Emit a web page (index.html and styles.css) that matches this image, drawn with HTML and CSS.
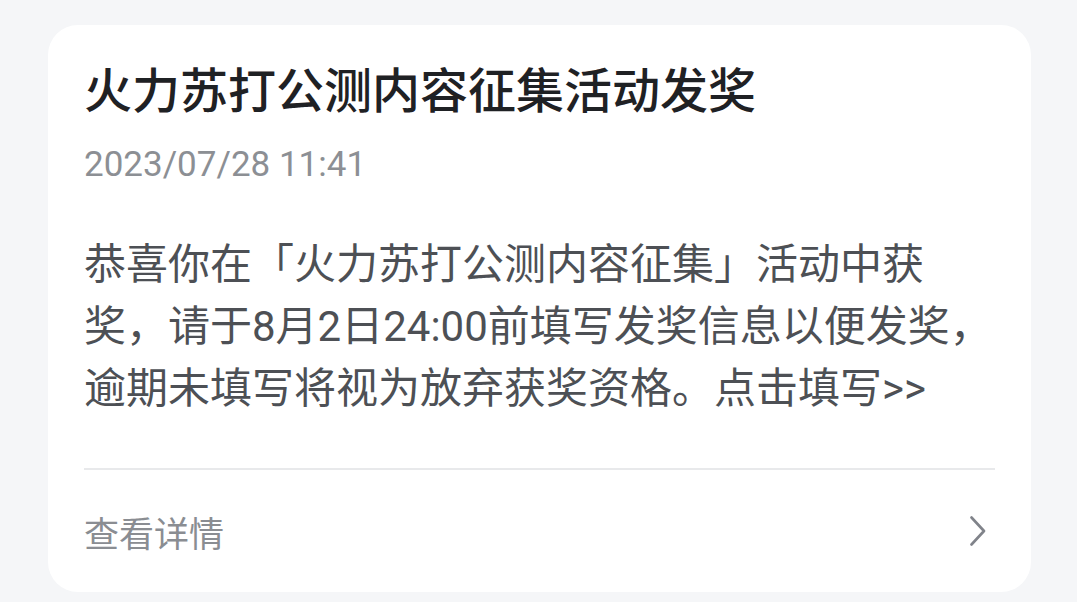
FILE: index.html
```html
<!DOCTYPE html>
<html lang="zh-CN">

<head>
    <meta charset="UTF-8">
    <link rel="stylesheet" href="styles.css">
</head>

<body>
    <div class="page">
        <div class="notice-card">
            <h1 class="notice-title">火力苏打公测内容征集活动发奖</h1>
            <div class="notice-time">2023/07/28 11:41</div>
            <p class="notice-body">恭喜你在「火力苏打公测内容征集」活动中获奖，请于8月2日24:00前填写发奖信息以便发奖，逾期未填写将视为放弃获奖资格。点击填写&gt;&gt;</p>
            <div class="divider"></div>
            <div class="notice-footer">
                <span>查看详情</span>
                <svg class="chevron" width="16" height="30" viewBox="0 0 16 30">
                    <polyline points="1.5,1.5 14,15 1.5,28.5" fill="none" stroke="#80838a" stroke-width="2.6" stroke-linecap="round" stroke-linejoin="round" />
                </svg>
            </div>
        </div>
    </div>
</body>

</html>
```

FILE: styles.css
```css
html,
body {
    margin: 0;
    padding: 0;
    background-color: #f5f6f8;
}

body {
    font-family: Roboto, "Noto Sans CJK SC", sans-serif;
}

.page {
    padding: 25px 46px 10px 48px;
}

.notice-card {
    background-color: #ffffff;
    border-radius: 30px;
    padding: 37px 36px 0 36px;
    height: 530px;
    display: flex;
    flex-direction: column;
}

.notice-title {
    margin: 0;
    font-size: 48px;
    line-height: 60px;
    font-weight: 500;
    color: #1f2124;
}

.notice-time {
    margin-top: 19px;
    font-size: 35px;
    line-height: 48px;
    color: #8c8f94;
}

.notice-body {
    margin: 45px 0 0 0;
    font-size: 42px;
    line-height: 62px;
    color: #4d5055;
}

.divider {
    margin-top: 48px;
    height: 2px;
    background-color: #e8e9eb;
}

.notice-footer {
    flex: 1;
    display: flex;
    justify-content: space-between;
    align-items: center;
    font-size: 35px;
    color: #8a8d92;
}

.chevron {
    margin-right: 9px;
}
```
